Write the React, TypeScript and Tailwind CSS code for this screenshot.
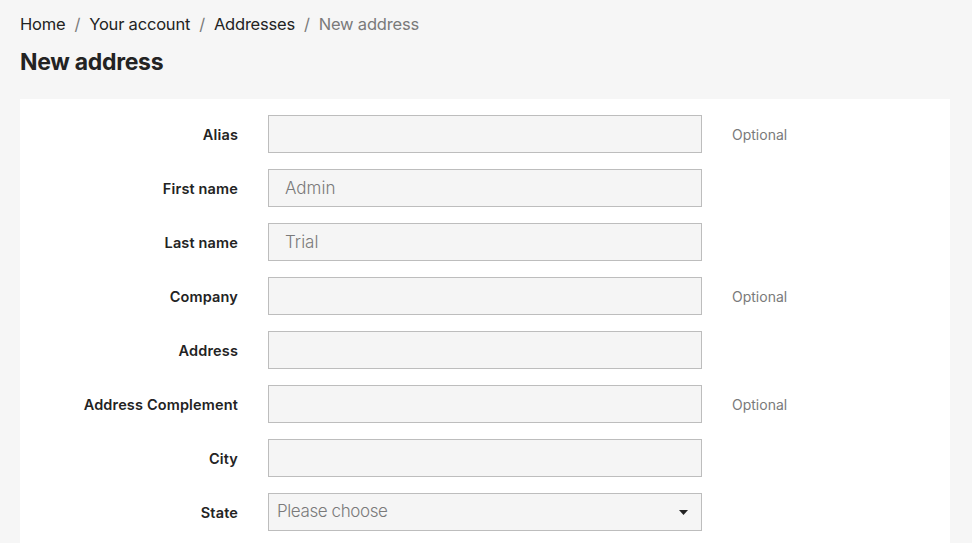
import React from 'react';

type Field = {
  label: string;
  placeholder?: string;
  optional?: boolean;
  select?: boolean;
};

const fields: Field[] = [
  { label: 'Alias', optional: true },
  { label: 'First name', placeholder: 'Admin' },
  { label: 'Last name', placeholder: 'Trial' },
  { label: 'Company', optional: true },
  { label: 'Address' },
  { label: 'Address Complement', optional: true },
  { label: 'City' },
  { label: 'State', select: true },
];

const crumbs = ['Home', 'Your account', 'Addresses'];

const App: React.FC = () => {
  return (
    <div
      className="min-h-screen bg-[#f6f6f6] text-[#232323] px-5 pt-[11px]"
      style={{ fontFamily: 'Inter, "Noto Sans", sans-serif' }}
    >
      <nav className="flex items-center text-[16.5px] leading-[26px] tracking-[-0.2px]">
        {crumbs.map(c => (
          <React.Fragment key={c}>
            <span>{c}</span>
            <span className="mx-[9px] text-[#7a7a7a]">/</span>
          </React.Fragment>
        ))}
        <span className="text-[#7a7a7a]">New address</span>
      </nav>

      <h1 className="mt-[11px] text-[23px] leading-[28px] font-bold tracking-[-0.3px]">New address</h1>

      <div className="mt-[23px] mr-[2px] bg-white pt-4 pb-4">
        {fields.map(f => (
          <div key={f.label} className="flex items-center h-[38px] mb-4">
            <label className="w-[218px] pt-[2px] text-right text-[14.5px] tracking-[0.15px] font-semibold text-[#232323]">{f.label}</label>
            <div className="ml-[30px] w-[434px] h-[38px]">
              {f.select ? (
                <div className="h-full bg-[#f5f5f5] border border-[#bdbdbd] flex items-center justify-between pl-2 pr-[13px]">
                  <span className="text-[17px] tracking-[-0.4px] font-light text-[#7a7a7a]">Please choose</span>
                  <svg width="9" height="5" viewBox="0 0 9 5">
                    <path d="M0 0h9L4.5 5z" fill="#232323" />
                  </svg>
                </div>
              ) : (
                <input
                  type="text"
                  placeholder={f.placeholder}
                  className="w-full h-full bg-[#f5f5f5] border border-[#bdbdbd] px-4 text-[17px] font-light placeholder:text-[#7a7a7a] outline-none"
                />
              )}
            </div>
            {f.optional && <span className="ml-[30px] text-[14px] text-[#7a7a7a]">Optional</span>}
          </div>
        ))}
      </div>
    </div>
  );
};

export default App;
